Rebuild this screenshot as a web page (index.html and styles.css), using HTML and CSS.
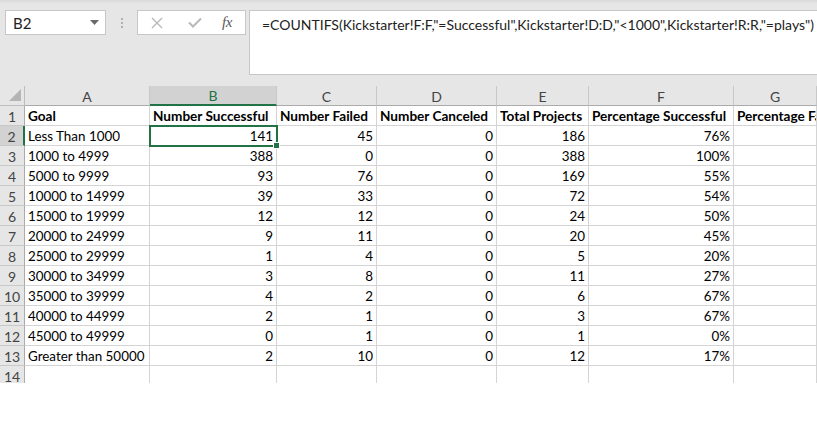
FILE: index.html
```html
<!DOCTYPE html>
<html>
<head>
<meta charset="utf-8">
<link rel="stylesheet" href="styles.css">
</head>
<body>
<div class="app">
  <div class="toolbar">
    <div class="namebox">
      <span class="name">B2</span>
      <svg class="caret" width="9" height="5" viewBox="0 0 9 5"><path d="M0 0 H9 L4.5 5 Z" fill="#6a6a6a"/></svg>
    </div>
    <div class="grip"><i></i><i></i><i></i></div>
    <div class="fbuttons">
      <svg class="ico" width="12" height="12" viewBox="0 0 12 12"><path d="M1 1 L11 11 M11 1 L1 11" stroke="#b8b8b8" stroke-width="1.4" fill="none"/></svg>
      <svg class="ico" width="14" height="11" viewBox="0 0 14 11"><path d="M1 5.5 L5 9.5 L13 1.5" stroke="#b8b8b8" stroke-width="2" fill="none"/></svg>
      <span class="fx">fx</span>
    </div>
    <div class="formula">=COUNTIFS(Kickstarter!F:F,"=Successful",Kickstarter!D:D,"&lt;1000",Kickstarter!R:R,"=plays")</div>
  </div>
  <div class="sheetwrap">
    <div class="sheet">
      <div class="hd corner"><svg width="12" height="12" viewBox="0 0 12 12"><path d="M12 0 V12 H0 Z" fill="#b4b4b4"/></svg></div>
      <div class="hd col">A</div>
      <div class="hd col sel">B</div>
      <div class="hd col">C</div>
      <div class="hd col">D</div>
      <div class="hd col">E</div>
      <div class="hd col">F</div>
      <div class="hd col">G</div>

      <div class="hd row">1</div>
      <div class="c b">Goal</div>
      <div class="c b">Number Successful</div>
      <div class="c b">Number Failed</div>
      <div class="c b">Number Canceled</div>
      <div class="c b">Total Projects</div>
      <div class="c b">Percentage Successful</div>
      <div class="c b clip">Percentage Failed</div>

      <div class="hd row sel">2</div>
      <div class="c">Less Than 1000</div>
      <div class="c n">141</div><div class="c n">45</div><div class="c n">0</div><div class="c n">186</div><div class="c n">76%</div><div class="c"></div>

      <div class="hd row">3</div>
      <div class="c">1000 to 4999</div>
      <div class="c n">388</div><div class="c n">0</div><div class="c n">0</div><div class="c n">388</div><div class="c n">100%</div><div class="c"></div>

      <div class="hd row">4</div>
      <div class="c">5000 to 9999</div>
      <div class="c n">93</div><div class="c n">76</div><div class="c n">0</div><div class="c n">169</div><div class="c n">55%</div><div class="c"></div>

      <div class="hd row">5</div>
      <div class="c">10000 to 14999</div>
      <div class="c n">39</div><div class="c n">33</div><div class="c n">0</div><div class="c n">72</div><div class="c n">54%</div><div class="c"></div>

      <div class="hd row">6</div>
      <div class="c">15000 to 19999</div>
      <div class="c n">12</div><div class="c n">12</div><div class="c n">0</div><div class="c n">24</div><div class="c n">50%</div><div class="c"></div>

      <div class="hd row">7</div>
      <div class="c">20000 to 24999</div>
      <div class="c n">9</div><div class="c n">11</div><div class="c n">0</div><div class="c n">20</div><div class="c n">45%</div><div class="c"></div>

      <div class="hd row">8</div>
      <div class="c">25000 to 29999</div>
      <div class="c n">1</div><div class="c n">4</div><div class="c n">0</div><div class="c n">5</div><div class="c n">20%</div><div class="c"></div>

      <div class="hd row">9</div>
      <div class="c">30000 to 34999</div>
      <div class="c n">3</div><div class="c n">8</div><div class="c n">0</div><div class="c n">11</div><div class="c n">27%</div><div class="c"></div>

      <div class="hd row">10</div>
      <div class="c">35000 to 39999</div>
      <div class="c n">4</div><div class="c n">2</div><div class="c n">0</div><div class="c n">6</div><div class="c n">67%</div><div class="c"></div>

      <div class="hd row">11</div>
      <div class="c">40000 to 44999</div>
      <div class="c n">2</div><div class="c n">1</div><div class="c n">0</div><div class="c n">3</div><div class="c n">67%</div><div class="c"></div>

      <div class="hd row">12</div>
      <div class="c">45000 to 49999</div>
      <div class="c n">0</div><div class="c n">1</div><div class="c n">0</div><div class="c n">1</div><div class="c n">0%</div><div class="c"></div>

      <div class="hd row">13</div>
      <div class="c">Greater than 50000</div>
      <div class="c n">2</div><div class="c n">10</div><div class="c n">0</div><div class="c n">12</div><div class="c n">17%</div><div class="c"></div>

      <div class="hd row">14</div>
      <div class="c"></div><div class="c"></div><div class="c"></div><div class="c"></div><div class="c"></div><div class="c"></div><div class="c"></div>

      <div class="selection"><span class="handle"></span></div>
    </div>
  </div>
</div>
</body>
</html>
```
FILE: styles.css
```css
html, body {
  margin: 0;
  padding: 0;
  background: #ffffff;
}
.app {
  width: 817px;
  height: 441px;
  overflow: hidden;
  font-family: Lato, "Liberation Sans", sans-serif;
}
.toolbar {
  height: 86px;
  background: #e6e6e6;
  background-image: linear-gradient(#d9d9d9, #e6e6e6 4px);
  display: flex;
  align-items: flex-start;
  padding-top: 10px;
  box-sizing: border-box;
}
.namebox {
  margin-left: 5px;
  width: 101px;
  height: 25px;
  box-sizing: border-box;
  background: #fff;
  border: 1px solid #c6c6c6;
  display: flex;
  align-items: center;
  padding: 0 6px 0 7px;
}
.name {
  flex: 1;
  font-size: 15px;
  color: #222;
}
.caret {
  display: block;
}
.grip {
  width: 31px;
  height: 25px;
  display: flex;
  flex-direction: column;
  align-items: center;
  justify-content: center;
  gap: 2px;
}
.grip i {
  width: 2px;
  height: 2px;
  background: #b0b0b0;
  display: block;
}
.fbuttons {
  width: 109px;
  height: 25px;
  box-sizing: border-box;
  background: #fff;
  border: 1px solid #c6c6c6;
  display: flex;
  align-items: center;
  padding-left: 13px;
  gap: 0;
}
.fbuttons .ico:first-child {
  margin-right: 25px;
}
.fbuttons .ico:nth-child(2) {
  margin-right: 20px;
}
.fx {
  font-family: "Liberation Serif", serif;
  font-style: italic;
  font-size: 15px;
  color: #595959;
  letter-spacing: -0.5px;
}
.formula {
  margin-left: 3px;
  flex: 1;
  height: 65px;
  box-sizing: border-box;
  background: #fff;
  border: 1px solid #c6c6c6;
  border-right: none;
  padding: 5px 0 0 12px;
  font-size: 14px;
  color: #222;
  white-space: nowrap;
  overflow: hidden;
}
.sheetwrap {
  height: 297px;
  overflow: hidden;
}
.sheet {
  position: relative;
  display: grid;
  grid-template-columns: 25px 125px 127px 100px 120px 92px 145px 83px;
  grid-auto-rows: 20px;
}
.hd {
  background: #e6e6e6;
  color: #444;
  font-size: 14px;
  display: flex;
  align-items: center;
  justify-content: center;
  box-sizing: border-box;
  border-right: 1px solid #bdbdbd;
  border-bottom: 1px solid #bdbdbd;
}
.hd.col {
  border-right-color: #c8c8c8;
  border-bottom-color: #ababab;
  padding-top: 1px;
}
.hd.row {
  border-bottom-color: #c8c8c8;
  border-right-color: #ababab;
  padding-top: 1px;
}
.hd.corner {
  align-items: flex-end;
  justify-content: flex-end;
  padding: 0 3px 4px 0;
}
.hd.corner svg {
  display: block;
}
.hd.col.sel {
  background: #d2d2d2;
  color: #217346;
  border-bottom: 2px solid #217346;
}
.hd.row.sel {
  background: #d2d2d2;
  border-right: 2px solid #217346;
}
.c {
  box-sizing: border-box;
  border-right: 1px solid #d4d4d4;
  border-bottom: 1px solid #d4d4d4;
  font-size: 13.4px;
  color: #000;
  padding: 0 3px;
  white-space: nowrap;
  display: flex;
  align-items: flex-end;
  padding-bottom: 1px;
}
.c.b {
  font-weight: bold;
  font-size: 13.6px;
  overflow: hidden;
}
.c.n {
  justify-content: flex-end;
}
.selection {
  position: absolute;
  left: 149px;
  top: 39px;
  width: 129px;
  height: 22px;
  box-sizing: border-box;
  border: 2px solid #217346;
}
.handle {
  position: absolute;
  right: -4px;
  bottom: -4px;
  width: 5px;
  height: 5px;
  background: #217346;
  border: 1px solid #fff;
}
```
